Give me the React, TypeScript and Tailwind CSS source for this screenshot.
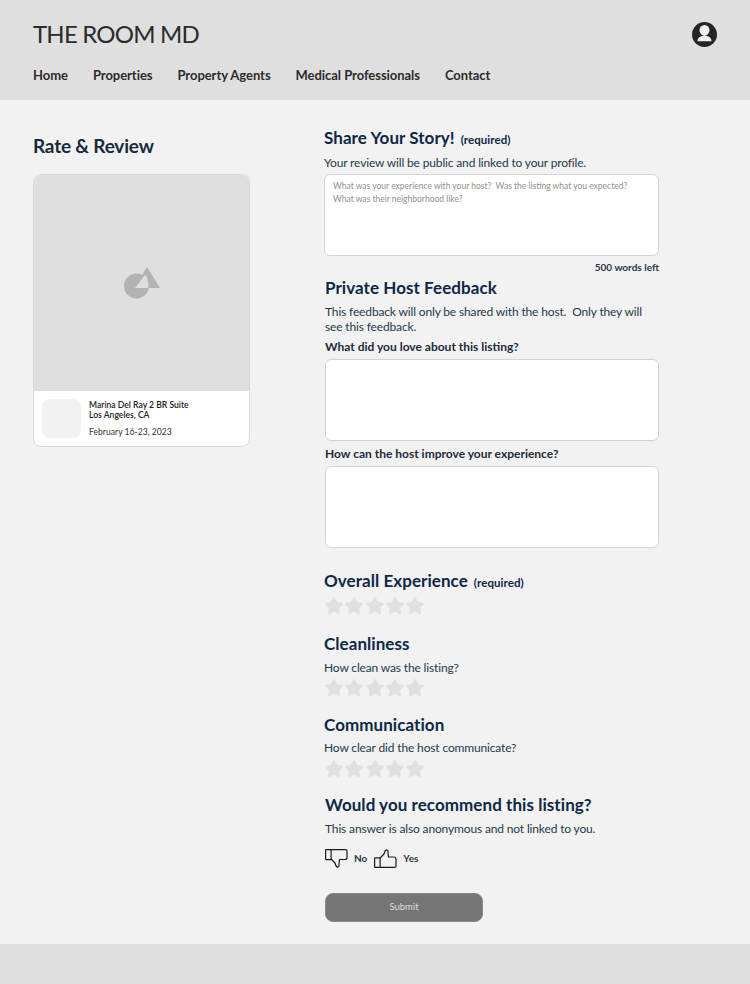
import { Star } from "lucide-react";

const navLinks = ["Home", "Properties", "Property Agents", "Medical Professionals", "Contact"];

function Stars() {
  return (
    <div className="flex gap-[0.3px] h-[20px] items-center">
      {[0, 1, 2, 3, 4].map((i) => (
        <Star key={i} className="w-[20px] h-[20px] text-[#e0e0e0] fill-[#e0e0e0]" strokeWidth={1.5} />
      ))}
    </div>
  );
}

function Heading({ text, note }: { text: string; note?: string }) {
  return (
    <h2 className="text-[17px] leading-[24px] tracking-[0.06px] font-bold text-[#0f2745]">
      {text}
      {note && <span className="text-[11.5px] ml-[6px]">{note}</span>}
    </h2>
  );
}

export default function App() {
  return (
    <div className="min-h-screen bg-[#f2f2f2] flex flex-col font-['Lato','Noto_Sans',sans-serif]">
      <header className="bg-[#dfdfdf] h-[100px] px-[33px] pt-[18px] shrink-0">
        <div className="flex items-center justify-between">
          <div className="text-[24px] leading-[32px] tracking-[-0.8px] text-[#2b2b2b]">THE ROOM MD</div>
          <svg width="25" height="25" viewBox="0 0 25 25" className="mt-[1px]">
            <circle cx="12.500" cy="12.500" r="12.500" fill="#252525" />
            <ellipse cx="12.500" cy="8.300" rx="5" ry="5.300" fill="#f0f0f0" />
            <path d="M5.500 19.200c0-3 2-5 7-6 5 1 7 3 7 6z" fill="#f0f0f0" />
          </svg>
        </div>
        <nav className="flex gap-[25px] mt-[15px] text-[13px] leading-[20px] tracking-[-0.05px] font-bold text-[#2b2b2b]">
          {navLinks.map((l) => (
            <a key={l}>{l}</a>
          ))}
        </nav>
      </header>

      <main className="flex-1 flex pl-[33px] pt-[26px]">
        <section className="w-[217px] shrink-0 mr-[74px] pt-[2px]">
          <h1 className="text-[19px] leading-[36px] tracking-[-0.2px] font-bold text-[#17293b]">Rate &amp; Review</h1>
          <div className="mt-[10px] rounded-lg border border-[#d9d9d9] bg-white overflow-hidden">
            <div className="h-[216px] bg-[#dfdfdf] flex items-center justify-center">
              <svg width="36" height="32" viewBox="0 0 36 32">
                <circle cx="12.500" cy="19" r="12.500" fill="#b3b3b3" />
                <path d="M23 0 L36 21 L10 21 Z" fill="#b3b3b3" />
                <path d="M21 8 L11 21 L24 21 C25 17 24 11 21 8Z" fill="#dfdfdf" />
              </svg>
            </div>
            <div className="flex gap-[8px] p-[8px] h-[55px]">
              <div className="w-[39px] h-[39px] rounded-lg bg-[#f2f2f2] shrink-0" />
              <div className="text-[8.600px] leading-[10px] text-[#222] pt-[1px]">
                <div className="font-semibold">Marina Del Ray 2 BR Suite</div>
                <div className="font-semibold">Los Angeles, CA</div>
                <div className="mt-[7px] text-[#333]">February 16-23, 2023</div>
              </div>
            </div>
          </div>
        </section>

        <section className="w-[335px]">
          <Heading text="Share Your Story!" note="(required)" />
          <p className="text-[12px] tracking-[-0.15px] leading-[18px] text-[#27384a] mt-[2px]">Your review will be public and linked to your profile.</p>
          <div className="mt-[2px] h-[82px] rounded-md border border-[#d4d4d4] bg-white px-[8px] py-[5px] text-[8.500px] leading-[12.500px] text-[#8f8f8f]">
            What was your experience with your host?&nbsp; Was the listing what you expected?
            <br />
            What was their neighborhood like?
          </div>
          <div className="text-right text-[10px] leading-[12px] font-bold text-[#27384a] mt-[5px]">500 words left</div>

          <div className="mt-[3px] pl-[1px]">
            <Heading text="Private Host Feedback" />
            <p className="text-[12px] tracking-[-0.15px] leading-[15px] text-[#27384a] mt-[4px] pr-[14px]">
              This feedback will only be shared with the host.&nbsp; Only they will see this feedback.
            </p>
            <div className="text-[12px] leading-[16px] font-bold text-[#1d2b3a] mt-[5px]">What did you love about this listing?</div>
            <div className="mt-[4px] h-[82px] rounded-md border border-[#d4d4d4] bg-white" />
            <div className="text-[12px] leading-[16px] font-bold text-[#1d2b3a] mt-[5px]">How can the host improve your experience?</div>
            <div className="mt-[4px] h-[82px] rounded-md border border-[#d4d4d4] bg-white" />
          </div>

          <div className="mt-[21px]">
            <Heading text="Overall Experience" note="(required)" />
            <div className="mt-[1px]"><Stars /></div>
          </div>

          <div className="mt-[16px]">
            <Heading text="Cleanliness" />
            <p className="text-[12px] tracking-[-0.15px] leading-[18px] text-[#27384a] mt-[3px]">How clean was the listing?</p>
            <div className="mt-[1px]"><Stars /></div>
          </div>

          <div className="mt-[15px]">
            <Heading text="Communication" />
            <p className="text-[12px] tracking-[-0.15px] leading-[18px] text-[#27384a] mt-[2px]">How clear did the host communicate?</p>
            <div className="mt-[2px]"><Stars /></div>
          </div>

          <div className="mt-[14px] pl-[1px]">
            <Heading text="Would you recommend this listing?" />
            <p className="text-[12px] tracking-[-0.15px] leading-[18px] text-[#27384a] mt-[3px]">This answer is also anonymous and not linked to you.</p>
            <div className="flex items-center mt-[10px] text-[10px] font-bold text-[#27384a] h-[20px]">
              <svg width="23" height="19" viewBox="0 0 23 19" fill="none" stroke="#1a1a1a" strokeWidth="1.200" strokeLinejoin="round">
                <rect x="0.600" y="0.600" width="5.500" height="10" rx="0.500" />
                <path d="M6.100 0.600 H20.500 a1.500 1.500 0 0 1 1.500 1.500 V8.500 a2 2 0 0 1 -2 2 H14.500 L14 15 Q14.500 18 12.500 18.200 Q11 18 10 14 L6.100 10" />
              </svg>
              <span className="ml-[6px]">No</span>
              <svg className="ml-[7px]" width="23" height="19" viewBox="0 0 23 19" fill="none" stroke="#1a1a1a" strokeWidth="1.200" strokeLinejoin="round">
                <rect x="0.600" y="8.800" width="5.500" height="9.600" rx="0.500" />
                <path d="M6.100 18.400 H20.500 a1.500 1.500 0 0 0 1.500 -1.500 V10 a2 2 0 0 0 -2 -2 H14.500 L14 4 Q14.500 1 12.500 0.800 Q11 1 10 5 L6.100 9" />
              </svg>
              <span className="ml-[6px]">Yes</span>
            </div>
            <button className="mt-[25px] block w-[158px] h-[29px] rounded-lg border border-[#8a8a8a] bg-[#757575] text-[9.500px] text-[#dedede]">
              Submit
            </button>
          </div>
        </section>
      </main>

      <footer className="h-[40px] bg-[#dfdfdf] shrink-0" />
    </div>
  );
}
